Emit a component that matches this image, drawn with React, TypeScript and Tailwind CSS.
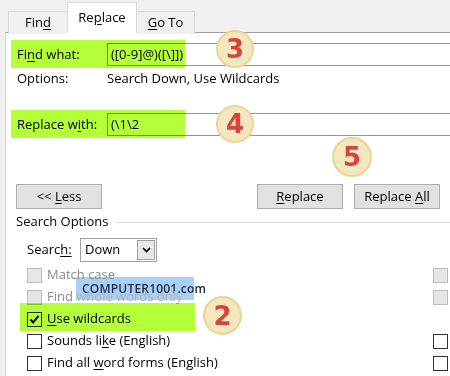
import React from "react";

const U = ({ children }: { children: React.ReactNode }) => (
  <span className="underline underline-offset-2">{children}</span>
);

const Badge = ({ n, className }: { n: string; className: string }) => (
  <div
    className={`absolute flex items-center justify-center rounded-full bg-[#f3e7bf] border-2 border-[#ead595] text-[#d8433d] font-bold text-[26px] leading-none ${className}`}
    style={{ fontFamily: '"DejaVu Sans", sans-serif' }}
  >
    {n}
  </div>
);

const Check = ({ disabled, checked }: { disabled?: boolean; checked?: boolean }) => (
  <div
    className={`w-[15px] h-[15px] shrink-0 border flex items-center justify-center ${
      disabled ? "bg-[#e6e6e6] border-[#bcbcbc]" : "bg-white border-[#333333]"
    }`}
  >
    {checked && (
      <svg width="11" height="11" viewBox="0 0 11 11">
        <path d="M1.5 5.5 L4.2 8.5 L9.5 1.8" stroke="#000" strokeWidth="2" fill="none" />
      </svg>
    )}
  </div>
);

const Row = ({
  children,
  disabled,
  checked,
  rightDisabled,
}: {
  children: React.ReactNode;
  disabled?: boolean;
  checked?: boolean;
  rightDisabled?: boolean;
}) => (
  <div className="h-[22px] flex items-center pl-[21px] pr-[2px]">
    <Check disabled={disabled} checked={checked} />
    <span className={`ml-[5px] ${disabled ? "text-[#8a8a8a]" : "text-black"}`}>{children}</span>
    <div className="ml-auto">
      {rightDisabled === undefined ? null : <Check disabled={rightDisabled} />}
    </div>
  </div>
);

export default function App() {
  return (
    <div
      className="relative w-[450px] h-[376px] overflow-hidden bg-[#f0f0f0] text-[13px] text-black flex flex-col"
      style={{ fontFamily: '"Open Sans", "Noto Sans", sans-serif' }}
    >
      {/* Tabs */}
      <div className="h-[33px] flex items-end pl-[8px] shrink-0 relative z-10">
        <div className="w-[59px] h-[23px] border border-b-0 border-[#d9d9d9] bg-[#f0f0f0] flex items-center justify-center -mb-px border-r-0">
          <span>Fin<U>d</U></span>
        </div>
        <div className="w-[70px] h-[31px] border border-b-0 border-[#d9d9d9] bg-white flex items-center justify-center">
          <span>Re<U>p</U>lace</span>
        </div>
        <div className="w-[58px] h-[23px] border border-b-0 border-[#d9d9d9] bg-[#f0f0f0] flex items-center justify-center -mb-px border-l-0">
          <span><U>G</U>o To</span>
        </div>
      </div>

      {/* Panel */}
      <div className="ml-[5px] -mt-px flex-1 bg-white border-l border-t border-[#d9d9d9] border-t-[#a0a0a0] flex flex-col overflow-hidden">
        {/* Find what */}
        <div className="mt-[10px] h-[23px] flex items-center pl-[11px]">
          <span className="w-[90px] shrink-0">
            Fi<U>n</U>d what:
          </span>
          <div className="w-[400px] shrink-0 h-[23px] border border-[#959595] flex items-center pl-[3px]">
            ([0-9]@)([\]])
          </div>
        </div>
        {/* Options */}
        <div className="mt-[5px] h-[16px] flex items-center pl-[11px]">
          <span className="w-[90px] shrink-0">Options:</span>
          <span>Search Down, Use Wildcards</span>
        </div>
        {/* Replace with */}
        <div className="mt-[26px] h-[23px] flex items-center pl-[11px]">
          <span className="w-[90px] shrink-0">
            Replace w<U>i</U>th:
          </span>
          <div className="w-[400px] shrink-0 h-[23px] border border-[#959595] flex items-center pl-[3px]">
            (\1\2
          </div>
        </div>
        {/* Buttons */}
        <div className="mt-[48px] flex items-center pl-[10px] pr-[10px]">
          <button className="w-[86px] h-[25px] bg-[#e1e1e1] border border-[#adadad] flex items-center justify-center">
            <span>&lt;&lt; <U>L</U>ess</span>
          </button>
          <button className="ml-auto w-[86px] h-[25px] bg-[#e1e1e1] border border-[#adadad] flex items-center justify-center">
            <span><U>R</U>eplace</span>
          </button>
          <button className="ml-[11px] w-[86px] h-[25px] bg-[#e1e1e1] border border-[#adadad] flex items-center justify-center">
            <span>Replace <U>A</U>ll</span>
          </button>
        </div>
        {/* Search Options */}
        <div className="mt-[5px] h-[16px] flex items-center pl-[10px]">
          <span>Search Options</span>
          <div className="flex-1 ml-[6px] h-px bg-[#dcdcdc]" />
        </div>
        {/* Search select */}
        <div className="mt-[8px] h-[24px] flex items-center pl-[21px]">
          <span className="w-[53px]">
            Searc<U>h:</U>
          </span>
          <div className="w-[77px] h-[24px] border border-[#a0a0a0] flex items-center">
            <span className="pl-[4px] flex-1">Down</span>
            <div className="w-[18px] h-[20px] mr-[1px] border border-[#a0a0a0] bg-[#e8e8e8] flex items-center justify-center">
              <svg width="9" height="6" viewBox="0 0 9 6">
                <path d="M1 1 L4.5 4.5 L8 1" stroke="#000" strokeWidth="1.6" fill="none" />
              </svg>
            </div>
          </div>
        </div>
        {/* Checkboxes */}
        <div className="mt-[2px] relative">
          <div className="absolute left-[70px] top-[13px] w-[118px] h-[23px] bg-[#a9d1f7] flex items-center pl-[6px] text-[12px] font-semibold text-[#1c2a44] tracking-[0.2px]">
            COMPUTER1001.com
          </div>
          <div className="relative">
            <Row disabled rightDisabled>
              Match case
            </Row>
            <Row disabled rightDisabled>
              Find <span className="text-[#b0b0b0]">whole words only</span>
            </Row>
            <Row checked>
              <U>U</U>se wildcards
            </Row>
            <Row rightDisabled={false}>
              Sounds li<U>k</U>e (English)
            </Row>
            <Row rightDisabled={false}>
              Find all <U>w</U>ord forms (English)
            </Row>
          </div>
        </div>
      </div>

      {/* Highlights */}
      <div className="absolute left-[11px] top-[40px] w-[174px] h-[28px] bg-[#b4ff3a] mix-blend-multiply" />
      <div className="absolute left-[11px] top-[110px] w-[174px] h-[28px] bg-[#b4ff3a] mix-blend-multiply" />
      <div className="absolute left-[20px] top-[303px] w-[175px] h-[28px] bg-[#b4ff3a] mix-blend-multiply" />

      {/* Badges */}
      <Badge n="3" className="left-[216px] top-[30px] w-[38px] h-[38px]" />
      <Badge n="4" className="left-[216px] top-[105px] w-[38px] h-[38px]" />
      <Badge n="5" className="left-[332px] top-[137px] w-[40px] h-[40px]" />
      <Badge n="2" className="left-[203px] top-[296px] w-[39px] h-[39px]" />
    </div>
  );
}
